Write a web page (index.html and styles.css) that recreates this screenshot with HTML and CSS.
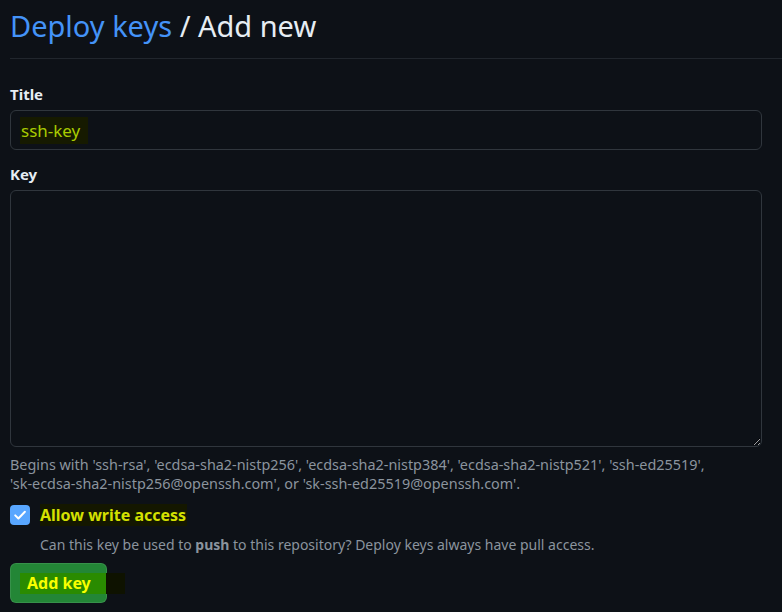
FILE: index.html
```html
<!DOCTYPE html>
<html lang="en">
<head>
<meta charset="utf-8">
<title>Add deploy key</title>
<link rel="stylesheet" href="styles.css">
</head>
<body>
<div class="page">
  <div class="subhead">
    <h2 class="subhead-heading"><a class="crumb" href="#">Deploy keys</a> / Add new</h2>
  </div>
  <form class="form">
    <div class="field">
      <label class="label">Title</label>
      <div class="text-input"><span class="hl hl-title">ssh-key</span></div>
    </div>
    <div class="field field-key">
      <label class="label">Key</label>
      <textarea class="textarea"></textarea>
      <p class="note">Begins with <span class="nb">'ssh-rsa',</span> <span class="nb">'ecdsa-sha2-nistp256',</span> <span class="nb">'ecdsa-sha2-nistp384',</span> <span class="nb">'ecdsa-sha2-nistp521',</span> <span class="nb">'ssh-ed25519',</span> <span class="nb">'sk-ecdsa-sha2-nistp256@openssh.com',</span> or <span class="nb">'sk-ssh-ed25519@openssh.com'.</span></p>
    </div>
    <div class="check-row">
      <span class="checkbox">
        <svg viewBox="0 0 16 16" width="16" height="16"><path d="M3.2 8.4 6.4 11.5 12.9 4.8" fill="none" stroke="#fff" stroke-width="2" stroke-linecap="round" stroke-linejoin="round"/></svg>
      </span>
      <div class="check-text">
        <span class="hl hl-allow">Allow write access</span>
        <p class="check-note">Can this key be used to <strong>push</strong> to this repository? Deploy keys always have pull access.</p>
      </div>
    </div>
    <button type="button" class="btn"><span class="hl hl-btn">Add key</span></button>
  </form>
</div>
</body>
</html>
```

FILE: styles.css
```css
html, body {
  margin: 0;
  padding: 0;
  background: #0d1117;
  color: #e6edf3;
  font-family: "Noto Sans", "Open Sans", sans-serif;
}

.page {
  padding: 0 20px 0 10px;
}

.subhead {
  margin-right: -20px;
  border-bottom: 1px solid #21262d;
  padding: 6px 0 12px;
}

.subhead-heading {
  margin: 0;
  font-size: 29px;
  font-weight: 400;
  line-height: 40px;
  color: #e6edf3;
}

.crumb {
  color: #4493f8;
  text-decoration: none;
}

.form {
  padding-top: 23px;
}

.field {
  margin-bottom: 12px;
}

.field-key {
  margin-bottom: 0;
}

.label {
  display: block;
  font-size: 15px;
  font-weight: 700;
  line-height: 24px;
  margin-bottom: 4px;
}

.text-input {
  box-sizing: border-box;
  height: 40px;
  border: 1px solid #30363d;
  border-radius: 6px;
  padding: 5px 9px;
  display: flex;
  align-items: center;
}

.hl {
  display: inline-block;
}

.hl-title {
  background: #161a00;
  color: #a9cc00;
  font-size: 17px;
  line-height: 27px;
  padding: 0 8px 0 1px;
}

.textarea {
  display: block;
  box-sizing: border-box;
  width: 100%;
  height: 257px;
  background: #0d1117;
  border: 1px solid #30363d;
  border-radius: 6px;
  color: #e6edf3;
  color-scheme: dark;
  resize: vertical;
  margin: 0;
}

.note {
  margin: 8px 0 0;
  font-size: 14.4px;
  line-height: 19px;
  color: #8b949e;
}

.nb {
  white-space: nowrap;
}

.check-row {
  display: flex;
  align-items: flex-start;
  gap: 10px;
  margin-top: 11px;
}

.checkbox {
  flex: none;
  width: 20px;
  height: 20px;
  border-radius: 4px;
  background: #58a6ff;
  display: flex;
  align-items: center;
  justify-content: center;
  margin-top: 1px;
}

.hl-allow {
  background: #141700;
  color: #d4e100;
  font-size: 16px;
  font-weight: 700;
  line-height: 22px;
  padding-right: 1px;
}

.check-note {
  margin: 9px 0 0;
  font-size: 14px;
  line-height: 20px;
  color: #8b949e;
}

.check-note strong {
  color: #8b949e;
}

.btn {
  margin-top: 8px;
  width: 97px;
  height: 40px;
  border: 1px solid rgba(240, 246, 252, 0.1);
  border-radius: 6px;
  background: #238636;
  padding: 0 0 0 9px;
  text-align: left;
  font-family: inherit;
  display: flex;
  align-items: center;
  cursor: pointer;
}

.hl-btn {
  background: linear-gradient(to right, #2a8b00 0 86px, #0e1200 86px);
  color: #f8ff00;
  font-size: 16px;
  font-weight: 700;
  line-height: 21px;
  padding: 0 34px 0 7px;
  white-space: nowrap;
}
```
